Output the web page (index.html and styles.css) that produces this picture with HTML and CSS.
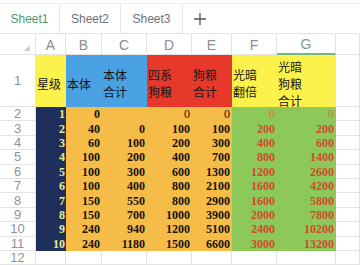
FILE: index.html
```html
<!DOCTYPE html>
<html>
<head>
<meta charset="utf-8">
<link rel="stylesheet" href="styles.css">
</head>
<body>
<div class="tabs">
  <div class="tab active">Sheet1</div>
  <div class="tab">Sheet2</div>
  <div class="tab">Sheet3</div>
  <div class="add"><svg width="14" height="14" viewBox="0 0 14 14"><path d="M7 1v12M1 7h12" stroke="#555" stroke-width="1.3" fill="none"/></svg></div>
</div>
<div class="sheet">
  <div class="c corner"><span class="tri"></span></div>
  <div class="c ch">A</div><div class="c ch">B</div><div class="c ch">C</div><div class="c ch">D</div><div class="c ch">E</div><div class="c ch">F</div><div class="c ch sel">G</div><div class="c ch"></div>

  <div class="c rh">1</div>
  <div class="hd yel">星级</div>
  <div class="hd blu">本体</div>
  <div class="hd blu">本体<br>合计</div>
  <div class="hd red">四系<br>狗粮</div>
  <div class="hd red">狗粮<br>合计</div>
  <div class="hd yel">光暗<br>翻倍</div>
  <div class="hd yel tall">光暗<br>狗粮<br>合计</div>
  <div class="c"></div>

  <div class="c rh">2</div><div class="n nv">1</div><div class="n or">0</div><div class="n or"></div><div class="n or thin">0</div><div class="n or thin">0</div><div class="n gr thin pale">0</div><div class="n gr thin pale">0</div><div class="c"></div>
  <div class="c rh">3</div><div class="n nv">2</div><div class="n or">40</div><div class="n or">0</div><div class="n or">100</div><div class="n or">100</div><div class="n gr">200</div><div class="n gr">200</div><div class="c"></div>
  <div class="c rh">4</div><div class="n nv">3</div><div class="n or">60</div><div class="n or">100</div><div class="n or">200</div><div class="n or">300</div><div class="n gr">400</div><div class="n gr">600</div><div class="c"></div>
  <div class="c rh">5</div><div class="n nv">4</div><div class="n or">100</div><div class="n or">200</div><div class="n or">400</div><div class="n or">700</div><div class="n gr">800</div><div class="n gr">1400</div><div class="c"></div>
  <div class="c rh">6</div><div class="n nv">5</div><div class="n or">100</div><div class="n or">300</div><div class="n or">600</div><div class="n or">1300</div><div class="n gr">1200</div><div class="n gr">2600</div><div class="c"></div>
  <div class="c rh">7</div><div class="n nv">6</div><div class="n or">100</div><div class="n or">400</div><div class="n or">800</div><div class="n or">2100</div><div class="n gr">1600</div><div class="n gr">4200</div><div class="c"></div>
  <div class="c rh">8</div><div class="n nv">7</div><div class="n or">150</div><div class="n or">550</div><div class="n or">800</div><div class="n or">2900</div><div class="n gr">1600</div><div class="n gr">5800</div><div class="c"></div>
  <div class="c rh">9</div><div class="n nv">8</div><div class="n or">150</div><div class="n or">700</div><div class="n or">1000</div><div class="n or">3900</div><div class="n gr">2000</div><div class="n gr">7800</div><div class="c"></div>
  <div class="c rh">10</div><div class="n nv">9</div><div class="n or">240</div><div class="n or">940</div><div class="n or">1200</div><div class="n or">5100</div><div class="n gr">2400</div><div class="n gr">10200</div><div class="c"></div>
  <div class="c rh">11</div><div class="n nv">10</div><div class="n or">240</div><div class="n or">1180</div><div class="n or">1500</div><div class="n or">6600</div><div class="n gr">3000</div><div class="n gr">13200</div><div class="c"></div>

  <div class="c rh">12</div><div class="c"></div><div class="c"></div><div class="c"></div><div class="c"></div><div class="c"></div><div class="c"></div><div class="c"></div><div class="c"></div>
</div>
</body>
</html>
```
FILE: styles.css
```css
html, body {
  margin: 0;
  padding: 0;
  background: #fff;
}
body {
  width: 360px;
  height: 265px;
  overflow: hidden;
  font-family: "Liberation Sans", Arial, sans-serif;
}
.tabs {
  margin-top: 3px;
  height: 31px;
  box-sizing: border-box;
  border-top: 1px solid #f0f0f0;
  border-bottom: 1px solid #e2e2e2;
  display: flex;
}
.tab {
  display: flex;
  align-items: center;
  justify-content: center;
  font-size: 12px;
  color: #707070;
  border-right: 1px solid #e6e6e6;
  box-sizing: border-box;
  width: 61px;
}
.tab:first-child { width: 60px; }
.tab:nth-child(3) { width: 62px; }
.tab.active { color: #4f9a6c; }
.add {
  display: flex;
  align-items: center;
  padding-left: 10px;
}
.sheet {
  display: grid;
  grid-template-columns: 36px 30px 36px 45px 45px 40px 45px 59px 24px;
  grid-template-rows: 21px 52px repeat(11, 14.4px);
}
.c {
  box-sizing: border-box;
  border-right: 1px solid #e3e3e3;
  border-bottom: 1px solid #e3e3e3;
}
.corner {
  display: flex;
  justify-content: flex-end;
  align-items: flex-end;
  padding: 0 5px 3px 0;
}
.tri {
  width: 0;
  height: 0;
  border-left: 6px solid transparent;
  border-bottom: 6px solid #cfcfcf;
}
.ch {
  display: flex;
  align-items: center;
  justify-content: center;
  font-size: 14px;
  color: #8e8e8e;
  padding-top: 1px;
}
.ch.sel {
  border-bottom: 2px solid #72b688;
  color: #7c9a88;
}
.rh {
  display: flex;
  align-items: center;
  justify-content: center;
  font-size: 13px;
  color: #939393;
}
.hd {
  display: flex;
  align-items: center;
  padding: 4px 0 0 1px;
  font-family: "Noto Sans CJK SC", sans-serif;
  font-size: 12px;
  line-height: 17px;
  color: #161616;
}
.hd.tall { padding-top: 5px; }
.yel { background: #fcf24b; }
.blu { background: #4aa2e4; }
.red { background: #e6392b; }
.n {
  display: flex;
  align-items: center;
  justify-content: flex-end;
  padding: 1px 2px 0 0;
  font-family: "Liberation Serif", "Times New Roman", serif;
  font-weight: bold;
  font-size: 12px;
  color: #1a1208;
}
.nv { background: #1f2f5c; color: #eeea8a; padding-right: 1px; }
.or { background: #f6bc48; }
.gr { background: #8dc85a; color: #d2492c; }
.thin { font-weight: normal; }
.pale { color: #d7773a; }
```
